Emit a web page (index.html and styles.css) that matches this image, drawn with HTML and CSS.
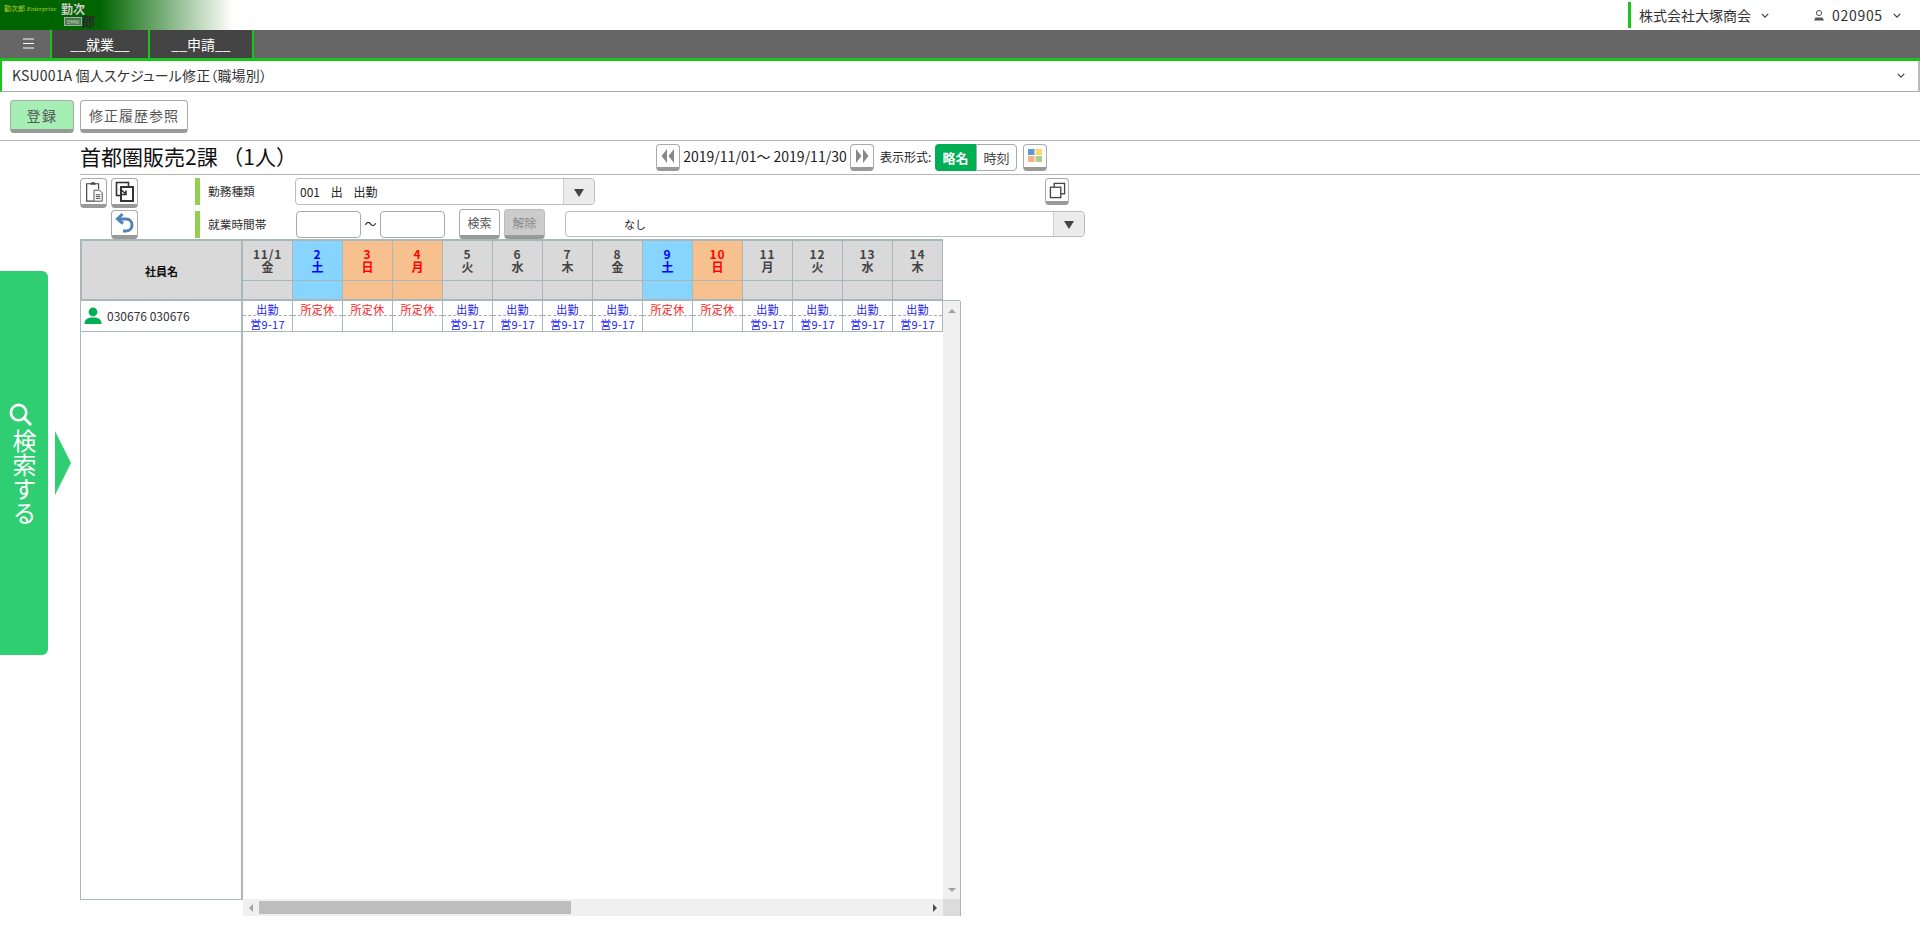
FILE: index.html
```html
<!DOCTYPE html>
<html lang="ja">
<head>
<meta charset="utf-8">
<title>KSU001A</title>
<link rel="stylesheet" href="styles.css">
</head>
<body>
<header class="top">
  <div class="logo">
    <span class="logo-en">勤次郎 <i>Enterprise</i></span>
    <span class="logo-mark"><span class="lm1">勤次</span><span class="lm3">OMNI</span><span class="lm2">郎</span></span>
  </div>
  <div class="top-right">
    <div class="company">株式会社大塚商会<svg class="chev" viewBox="0 0 10 6"><path d="M1 1l4 4 4-4" fill="none" stroke="#444" stroke-width="1.6"/></svg></div>
    <div class="user">
      <svg class="user-ic" viewBox="0 0 12 12"><circle cx="6" cy="4" r="2.6" fill="none" stroke="#555"/><path d="M1 11.500l1.500-3h7l1.500 3z" fill="#555"/></svg>
      <span>020905</span>
      <svg class="chev" viewBox="0 0 10 6"><path d="M1 1l4 4 4-4" fill="none" stroke="#444" stroke-width="1.6"/></svg>
    </div>
  </div>
</header>
<nav class="nav">
  <div class="burger"><svg viewBox="0 0 11 11"><path d="M0 1h11M0 5.500h11M0 10h11" stroke="#fff" stroke-width="1"/></svg></div>
  <div class="tab t1">__就業__</div>
  <div class="tab t2">__申請__</div>
</nav>
<div class="pagebar">
  <span>KSU001A 個人スケジュール修正（職場別）</span>
  <svg class="chev" viewBox="0 0 10 6"><path d="M1 1l4 4 4-4" fill="none" stroke="#444" stroke-width="1.6"/></svg>
</div>
<div class="actions">
  <button class="btn reg">登録</button>
  <button class="btn hist">修正履歴参照</button>
</div>

<aside class="search">
  <svg class="glass" viewBox="0 0 24 24"><circle cx="10" cy="10" r="8" fill="none" stroke="#fff" stroke-width="2.8"/><path d="M16 16l7 7" stroke="#fff" stroke-width="3"/></svg>
  <span class="search-text">検索する</span>
</aside>
<div class="search-arrow"></div>

<main class="main">
  <div class="heading">
    <h1>首都圏販売2課 （1人）</h1>
    <div class="period">
      <button class="btn ic nav-btn"><svg viewBox="0 0 16 16"><path d="M7 1v14L1.500 8zM14 1v14L8.500 8z" fill="#888"/></svg></button>
      <span class="dates">2019/11/01～ 2019/11/30</span>
      <button class="btn ic nav-btn"><svg viewBox="0 0 16 16"><path d="M2 1v14l5.500-7zM9 1v14l5.500-7z" fill="#888"/></svg></button>
      <span class="fmt">表示形式:</span>
      <div class="toggle"><span class="on">略名</span><span class="tgl-off">時刻</span></div>
      <button class="btn ic nav-btn"><svg viewBox="0 0 16 16"><rect x="1" y="1" width="6.500" height="6" fill="#5b9bd5"/><rect x="8.500" y="1" width="6.500" height="6" fill="#ffd966"/><rect x="1" y="8" width="6.500" height="6" fill="#f4b183"/><rect x="8.500" y="8" width="6.500" height="6" fill="#a9d18e"/></svg></button>
    </div>
  </div>

  <div class="tools">
    <div class="tool-row r1">
      <div class="tool-ics">
        <button class="btn ic tool"><svg viewBox="0 0 20 24"><path d="M6 3H2v19h8M12 3h3v6" fill="none" stroke="#444" stroke-width="1.300"/><path d="M6 4V2h2V1h2v1h2v2z" fill="#444"/><path d="M10 10h6l3 3v9h-9z" fill="#fff" stroke="#444"/><path d="M12 15h5M12 17h5M12 19h5" stroke="#444"/></svg></button>
        <button class="btn ic tool"><svg viewBox="0 0 20 22"><rect x="1.500" y="1.500" width="12" height="13" fill="none" stroke="#333" stroke-width="1.600"/><rect x="6" y="6" width="12" height="14" fill="#fff" stroke="#333" stroke-width="2"/><path d="M3 7l6 5M9 8.500V12.500H5" fill="none" stroke="#333" stroke-width="1.600" transform="translate(2 1)"/></svg></button>
      </div>
      <div class="lbl">勤務種類</div>
      <div class="select s1"><span>001&nbsp;&nbsp;&nbsp;&nbsp;出&nbsp;&nbsp;&nbsp;&nbsp;出勤</span><b><i class="tri"></i></b></div>
      <button class="btn ic tool dup"><svg viewBox="0 0 18 18"><rect x="5.500" y="1.500" width="11" height="11" fill="none" stroke="#444" stroke-width="1.400"/><rect x="1.500" y="5.500" width="11" height="11" fill="#fff" stroke="#444" stroke-width="1.400"/></svg></button>
    </div>
    <div class="tool-row r2">
      <div class="tool-ics">
        <span class="spacer"></span>
        <button class="btn ic tool"><svg viewBox="0 0 20 22"><path d="M7.500 2L2.500 7l5.500 4.500" fill="none" stroke="#4f81bd" stroke-width="3"/><path d="M3 7h8c4 0 6 3 6 6s-2 6-6 6H8" fill="none" stroke="#4f81bd" stroke-width="3"/></svg></button>
      </div>
      <div class="lbl">就業時間帯</div>
      <input class="time first" type="text">
      <span class="tilde">～</span>
      <input class="time" type="text">
      <button class="btn sm find">検索</button>
      <button class="btn sm clear">解除</button>
      <div class="select s2"><span>なし</span><b><i class="tri"></i></b></div>
    </div>
  </div>

  <div class="sheet">
    <div class="names">
      <div class="name-head">社員名</div>
      <div class="name-row">
        <svg viewBox="0 0 18 18"><circle cx="9" cy="5" r="4.400" fill="#00ae53"/><path d="M0.500 17c0-5 3-6.500 8.500-6.500s8.500 1.500 8.500 6.500z" fill="#00ae53"/></svg>
        <span>030676 030676</span>
      </div>
    </div>
    <div class="days">
      <div class="cal">
        <div class="d"><span>11/1</span><span>金</span></div>
        <div class="d sat"><span>2</span><span>土</span></div>
        <div class="d sun"><span>3</span><span>日</span></div>
        <div class="d sun"><span>4</span><span>月</span></div>
        <div class="d"><span>5</span><span>火</span></div>
        <div class="d"><span>6</span><span>水</span></div>
        <div class="d"><span>7</span><span>木</span></div>
        <div class="d"><span>8</span><span>金</span></div>
        <div class="d sat"><span>9</span><span>土</span></div>
        <div class="d sun"><span>10</span><span>日</span></div>
        <div class="d"><span>11</span><span>月</span></div>
        <div class="d"><span>12</span><span>火</span></div>
        <div class="d"><span>13</span><span>水</span></div>
        <div class="d"><span>14</span><span>木</span></div>

        <div class="e"></div><div class="e sat"></div><div class="e sun"></div><div class="e sun"></div><div class="e"></div><div class="e"></div><div class="e"></div><div class="e"></div><div class="e sat"></div><div class="e sun"></div><div class="e"></div><div class="e"></div><div class="e"></div><div class="e"></div>
      </div>
      <div class="body">
        <div class="rows">
          <div class="sch"><div class="w">出勤</div><div class="w">営9-17</div></div>
          <div class="sch rest"><div class="w">所定休</div><div class="w"></div></div>
          <div class="sch rest"><div class="w">所定休</div><div class="w"></div></div>
          <div class="sch rest"><div class="w">所定休</div><div class="w"></div></div>
          <div class="sch"><div class="w">出勤</div><div class="w">営9-17</div></div>
          <div class="sch"><div class="w">出勤</div><div class="w">営9-17</div></div>
          <div class="sch"><div class="w">出勤</div><div class="w">営9-17</div></div>
          <div class="sch"><div class="w">出勤</div><div class="w">営9-17</div></div>
          <div class="sch rest"><div class="w">所定休</div><div class="w"></div></div>
          <div class="sch rest"><div class="w">所定休</div><div class="w"></div></div>
          <div class="sch"><div class="w">出勤</div><div class="w">営9-17</div></div>
          <div class="sch"><div class="w">出勤</div><div class="w">営9-17</div></div>
          <div class="sch"><div class="w">出勤</div><div class="w">営9-17</div></div>
          <div class="sch"><div class="w">出勤</div><div class="w">営9-17</div></div>
        </div>
        <div class="vbar"><i class="up"></i><i class="down"></i></div>
        <div class="hbar"><i class="left"></i><div class="track"><div class="thumb"></div></div><i class="right"></i></div>
        <div class="corner"></div>
      </div>
    </div>
  </div>
</main>
</body>
</html>
```
FILE: styles.css
```css
* { box-sizing: border-box; }
html, body { margin: 0; height: 925px; overflow: hidden; background: #fff; }
body { font-family: "Noto Sans CJK JP", "Noto Sans", sans-serif; color: #222; position: relative; font-size: 13px; font-feature-settings: "palt"; }
button { font-family: inherit; font-feature-settings: inherit; padding: 0; cursor: pointer; }

.top { height: 30px; display: flex; justify-content: space-between; }
.logo { width: 233px; background: linear-gradient(90deg, #006400 0, #006400 100px, #fff 100%); display: flex; position: relative; }
.logo-en { font-family: "Liberation Serif", "Noto Sans CJK JP", serif; font-size: 7px; color: #b5d334; margin: 5px 0 0 4px; line-height: 9px; white-space: nowrap; }
.logo-mark { position: absolute; left: 61px; top: 3px; width: 34px; height: 25px; }
.lm1 { position: absolute; left: 0; top: 0; font-size: 12px; line-height: 12px; color: #ccc; font-weight: 700; white-space: nowrap; }
.lm3 { position: absolute; left: 3px; top: 14px; width: 18px; height: 9px; border: 1px solid #aaa; background: #4a7a4a; color: #ddd; font-size: 5px; line-height: 7px; text-align: center; overflow: hidden; }
.lm2 { position: absolute; left: 21px; top: 11px; font-size: 13px; line-height: 14px; color: #2a2a2a; font-weight: 700; }
.top-right { display: flex; align-items: center; font-size: 14px; }
.company { height: 26px; border-left: 3px solid #19c519; padding-left: 8px; display: flex; align-items: center; gap: 10px; width: 185px; line-height: 20px; color: #333; }
.chev { width: 8px; height: 5px; flex: none; }
.user { width: 107px; display: flex; align-items: center; line-height: 20px; color: #333; letter-spacing: .7px; }
.user-ic { width: 12px; height: 12px; margin-right: 7px; }
.user .chev { margin-left: 10px; }

.nav { height: 31px; background: #666; border-bottom: 3px solid #19c519; display: flex; color: #fff; font-size: 14px; line-height: 28px; }
.burger { width: 52px; padding: 8px 0 0 23px; border-right: 2px solid #19c519; }
.burger svg { display: block; width: 11px; height: 11px; }
.tab { background: #444; border-right: 2px solid #19c519; text-align: center; }
.t1 { width: 98px; }
.t2 { width: 104px; }

.pagebar { height: 31px; border-left: 2px solid #19c519; border-right: 2px solid #bbb; border-bottom: 1px solid #aaa; display: flex; justify-content: space-between; align-items: center; padding: 0 13px 2px 10px; font-size: 14px; color: #333; letter-spacing: .16px; }
.actions { height: 49px; padding: 8px 0 0 10px; border-bottom: 1px solid #b5b5b5; display: flex; gap: 6px; align-items: flex-start; }
.btn { background: #fff; border: 1px solid #aaa; border-bottom: 4px solid #999; border-radius: 4px; color: #555; }
.reg { width: 64px; height: 33px; background: #a6efb4; font-size: 14px; letter-spacing: 1.500px; }
.hist { width: 108px; height: 33px; font-size: 14px; letter-spacing: 1px; }

.search { position: absolute; left: 0; top: 271px; width: 48px; height: 384px; background: #2fce72; border-radius: 0 6px 6px 0; display: flex; flex-direction: column; align-items: center; padding-top: 132px; }
.glass { width: 23px; height: 23px; margin-right: 7px; flex: none; }
.search-text { writing-mode: vertical-rl; color: #fff; font-size: 24px; line-height: 24px; margin-top: 3px; font-feature-settings: normal; }
.search-arrow { position: absolute; left: 55px; top: 431px; width: 0; height: 0; border-left: 16px solid #2fce72; border-top: 32px solid transparent; border-bottom: 32px solid transparent; }

.main { margin-left: 80px; }
.heading { height: 34px; display: flex; border-bottom: 1px solid #b5b5b5; margin-bottom: 3px; }
h1 { margin: 0; font-size: 21px; font-weight: 400; line-height: 31px; color: #111; width: 576px; white-space: pre; flex: none; font-feature-settings: normal; }
.period { display: flex; align-items: flex-start; padding-top: 3px; }
.ic { display: flex; align-items: center; justify-content: center; }
.nav-btn { width: 24px; height: 27px; }
.nav-btn svg { width: 16px; height: 16px; }
.dates { width: 170px; text-align: center; font-size: 14px; line-height: 25px; color: #222; white-space: nowrap; }
.fmt { font-size: 12px; line-height: 25px; margin: 0 4px 0 6px; width: 51px; white-space: nowrap; }
.toggle { display: flex; height: 27px; font-size: 13px; line-height: 25px; text-align: center; margin-right: 6px; }
.toggle span { width: 41px; }
.on { background: #00ae53; color: #fff; font-weight: 700; border-radius: 4px 0 0 4px; padding-top: 1px; }
.tgl-off { border: 1px solid #aaa; border-radius: 0 4px 4px 0; color: #444; }

.tools { height: 64px; }
.tool-row { display: flex; align-items: flex-start; height: 32px; }
.tool-ics { width: 115px; display: flex; gap: 4px; flex: none; }
.spacer { width: 27px; }
.tool { width: 27px; height: 30px; }
.tool svg { width: 20px; height: 22px; }
.lbl { width: 100px; flex: none; height: 27px; border-left: 5px solid #92d050; padding-left: 8px; font-size: 11.700px; line-height: 25px; color: #333; white-space: nowrap; font-feature-settings: normal; }
.select { border: 1px solid #bbb; border-radius: 4px; display: flex; height: 27px; font-size: 12px; line-height: 25px; color: #222; background: #fff; font-feature-settings: normal; }
.select span { flex: 1; padding-left: 4px; white-space: nowrap; }
.select b { width: 31px; background: #ececec; border-left: 1px solid #ccc; border-radius: 0 4px 4px 0; display: flex; align-items: center; justify-content: center; padding-top: 2px; }
.tri { width: 0; height: 0; border-left: 5px solid transparent; border-right: 5px solid transparent; border-top: 8px solid #444; }
.s1 { width: 300px; }
.dup { width: 24px; height: 27px; margin-left: 450px; }
.dup svg { width: 17px; height: 17px; }
.r2 .tool { height: 29px; }
.r2 .lbl { margin-top: 1px; }
.time { width: 65px; height: 27px; border: 1px solid #aaa; border-radius: 4px; margin-top: 1px; background: #fff; padding: 0; }
.first { margin-left: 1px; }
.tilde { width: 19px; text-align: center; line-height: 28px; font-size: 12px; }
.sm { width: 41px; height: 30px; font-size: 12px; margin: -1px 0 0 14px; color: #555; }
.clear { background: #ccc; margin-left: 4px; color: #888; border-color: #bbb; border-bottom-color: #999; }
.s2 { width: 520px; margin-left: 20px; margin-top: 1px; height: 26px; font-size: 11px; }
.s2 span { padding-left: 58px; }

.sheet { display: flex; align-items: flex-start; margin-top: -3px; }
.names { width: 163px; height: 661px; border: 1px solid #a8b8b8; border-top-width: 2px; border-right-width: 2px; flex: none; }
.name-head { height: 60px; background: #d9d9d9; border-left: 1px solid #a8b8b8; border-bottom: 2px solid #a8b8b8; font-size: 11px; font-weight: 700; text-align: center; line-height: 60px; color: #111; }
.name-row { height: 31px; border-bottom: 1px solid #a8b8b8; display: flex; align-items: center; padding: 0 0 2px 3px; gap: 5px; font-size: 12px; color: #333; }
.name-row svg { width: 18px; height: 18px; margin-top: 2px; }
.days { width: 718px; flex: none; }
.cal { display: grid; grid-template-columns: repeat(14, 50px); grid-template-rows: 40px 20px; border-top: 2px solid #a8b8b8; width: 700px; }
.d { background: #d9d9d9; border-right: 1px solid #a8b8b8; border-bottom: 1px solid #a8b8b8; display: flex; flex-direction: column; align-items: center; font-weight: 700; font-size: 12px; line-height: 13px; padding-top: 6px; color: #444; }
.d span:first-child { letter-spacing: .8px; }
.e { background: #d9d9d9; border-right: 1px solid #a8b8b8; border-bottom: 2px solid #a8b8b8; }
.sat { background: #87d4ff; color: #00f; }
.sun { background: #f7c08f; color: #f00; }
.body { display: grid; grid-template-columns: 700px 17px; grid-template-rows: 598px 17px; border-right: 1px solid #a8b8b8; width: 718px; }
.rows { display: grid; grid-template-columns: repeat(14, 50px); align-content: start; }
.sch { height: 31px; border-right: 1px solid #a8b8b8; border-bottom: 1px solid #a8b8b8; color: #1a1aff; font-size: 11px; text-align: center; letter-spacing: .3px; font-feature-settings: normal; }
.w { height: 15px; line-height: 16px; }
.w:first-child { border-bottom: 1px dashed #aaa; padding-top: 2px; line-height: 13px; }
.rest { color: #f22; }
.vbar { background: #f0f0f0; border-top: 1px solid #a8b8b8; margin-top: -1px; display: flex; flex-direction: column; align-items: center; justify-content: space-between; padding: 8px 0 7px; }
.up { border-left: 4px solid transparent; border-right: 4px solid transparent; border-bottom: 4px solid #a3a3a3; }
.down { border-left: 4px solid transparent; border-right: 4px solid transparent; border-top: 4px solid #a3a3a3; }
.hbar { background: #f0f0f0; display: flex; align-items: center; }
.left { border-top: 4px solid transparent; border-bottom: 4px solid transparent; border-right: 4px solid #a3a3a3; margin-left: 6px; }
.right { border-top: 4px solid transparent; border-bottom: 4px solid transparent; border-left: 4px solid #505050; margin-right: 6px; }
.track { flex: 1; height: 13px; padding-left: 6px; }
.thumb { width: 312px; height: 13px; background: #bdbdbd; }
.corner { background: #dcdcdc; }
```
